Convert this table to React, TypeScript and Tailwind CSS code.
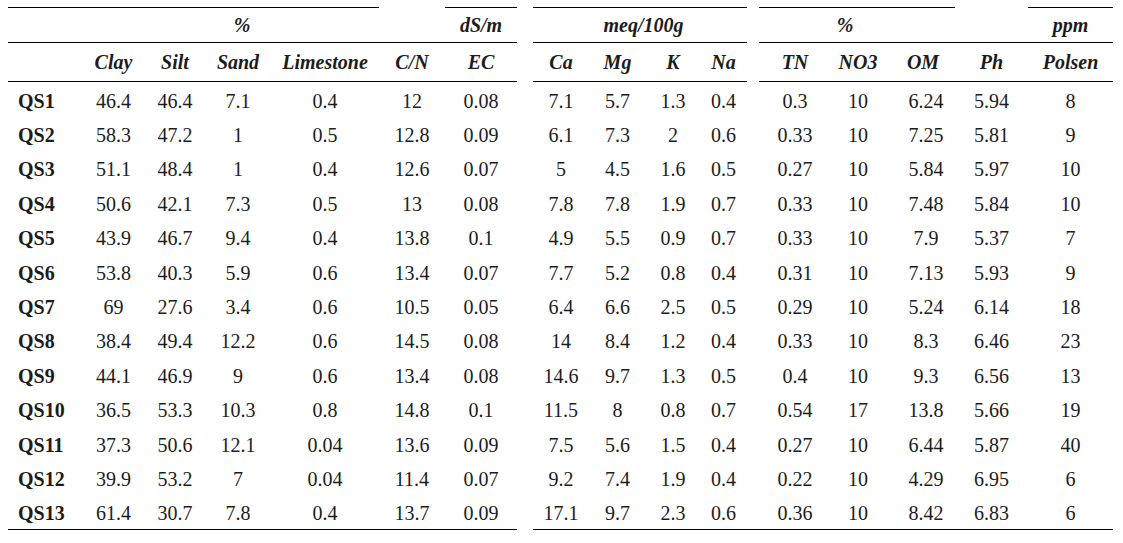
const rows: string[][] = [
  ["QS1", "46.4", "46.4", "7.1", "0.4", "12", "0.08", "7.1", "5.7", "1.3", "0.4", "0.3", "10", "6.24", "5.94", "8"],
  ["QS2", "58.3", "47.2", "1", "0.5", "12.8", "0.09", "6.1", "7.3", "2", "0.6", "0.33", "10", "7.25", "5.81", "9"],
  ["QS3", "51.1", "48.4", "1", "0.4", "12.6", "0.07", "5", "4.5", "1.6", "0.5", "0.27", "10", "5.84", "5.97", "10"],
  ["QS4", "50.6", "42.1", "7.3", "0.5", "13", "0.08", "7.8", "7.8", "1.9", "0.7", "0.33", "10", "7.48", "5.84", "10"],
  ["QS5", "43.9", "46.7", "9.4", "0.4", "13.8", "0.1", "4.9", "5.5", "0.9", "0.7", "0.33", "10", "7.9", "5.37", "7"],
  ["QS6", "53.8", "40.3", "5.9", "0.6", "13.4", "0.07", "7.7", "5.2", "0.8", "0.4", "0.31", "10", "7.13", "5.93", "9"],
  ["QS7", "69", "27.6", "3.4", "0.6", "10.5", "0.05", "6.4", "6.6", "2.5", "0.5", "0.29", "10", "5.24", "6.14", "18"],
  ["QS8", "38.4", "49.4", "12.2", "0.6", "14.5", "0.08", "14", "8.4", "1.2", "0.4", "0.33", "10", "8.3", "6.46", "23"],
  ["QS9", "44.1", "46.9", "9", "0.6", "13.4", "0.08", "14.6", "9.7", "1.3", "0.5", "0.4", "10", "9.3", "6.56", "13"],
  ["QS10", "36.5", "53.3", "10.3", "0.8", "14.8", "0.1", "11.5", "8", "0.8", "0.7", "0.54", "17", "13.8", "5.66", "19"],
  ["QS11", "37.3", "50.6", "12.1", "0.04", "13.6", "0.09", "7.5", "5.6", "1.5", "0.4", "0.27", "10", "6.44", "5.87", "40"],
  ["QS12", "39.9", "53.2", "7", "0.04", "11.4", "0.07", "9.2", "7.4", "1.9", "0.4", "0.22", "10", "4.29", "6.95", "6"],
  ["QS13", "61.4", "30.7", "7.8", "0.4", "13.7", "0.09", "17.1", "9.7", "2.3", "0.6", "0.36", "10", "8.42", "6.83", "6"],
];

const serif = "font-['Liberation_Serif'] text-[20px]";
const unitCell = `${serif} h-[35px] flex items-center justify-center font-bold italic`;
const headCell = `${serif} h-[40px] flex items-center justify-center border-t border-b border-black font-bold italic`;
const dataCell = `${serif} h-[34.4px] flex items-center justify-center pt-[3px]`;

function Heads({ names, pads = {} }: { names: string[]; pads?: Record<number, string> }) {
  return (
    <>
      {names.map((n, i) => (
        <div key={n + i} className={`${headCell} ${pads[i] ?? ""}`}>
          <span>{n}</span>
        </div>
      ))}
    </>
  );
}

function Cells({ from, to, pads = {} }: { from: number; to: number; pads?: Record<number, string> }) {
  return (
    <>
      {rows.map((r) =>
        r.slice(from, to).map((v, i) => {
          const col = from + i;
          if (col === 0) {
            return (
              <div key={r[0] + col} className={`${dataCell} justify-start pl-[10px] font-bold`}>
                <span>{v}</span>
              </div>
            );
          }
          return (
            <div key={r[0] + col} className={`${dataCell} ${pads[col] ?? ""}`}>
              <span>{v}</span>
            </div>
          );
        })
      )}
    </>
  );
}

export default function App() {
  return (
    <div className="min-h-screen bg-white font-['Liberation_Serif'] text-[20px] leading-none text-[#1c1c1c] pt-[7px] pl-[8px]">
      <div className="flex items-start gap-[16px]">
        {/* Texture, C/N and EC */}
        <div className="w-[509px] border-b border-black">
          <div className="grid grid-cols-[77px_57px_66px_60px_111px_66px_72px]">
            <div className={`${unitCell} col-span-5 border-t border-black pl-[97px]`}>%</div>
            <div className={unitCell}></div>
            <div className={`${unitCell} border-t border-black`}>dS/m</div>
            <Heads
              names={["", "Clay", "Silt", "Sand", "Limestone", "C/N", "EC"]}
              pads={{ 4: "pl-[3px]" }}
            />
            <Cells from={0} to={7} pads={{ 4: "pl-[3px]" }} />
          </div>
        </div>

        {/* Cations and the rest */}
        <div className="flex gap-[12px] border-b border-black">
          <div className="w-[214px] grid grid-cols-[56px_57px_54px_47px]">
            <div className={`${unitCell} col-span-4 border-t border-black pl-[7px]`}>meq/100g</div>
            <Heads names={["Ca", "Mg", "K", "Na"]} />
            <Cells from={7} to={11} />
          </div>
          <div className="w-[354px] grid grid-cols-[72px_54px_70px_73px_85px]">
            <div className={`${unitCell} col-span-3 border-t border-black pr-[24px]`}>%</div>
            <div className={unitCell}></div>
            <div className={`${unitCell} border-t border-black`}>ppm</div>
            <Heads names={["TN", "NO3", "OM", "Ph", "Polsen"]} pads={{ 2: "pl-[6px]" }} />
            <Cells from={11} to={16} pads={{ 13: "pl-[12px]" }} />
          </div>
        </div>
      </div>
    </div>
  );
}
